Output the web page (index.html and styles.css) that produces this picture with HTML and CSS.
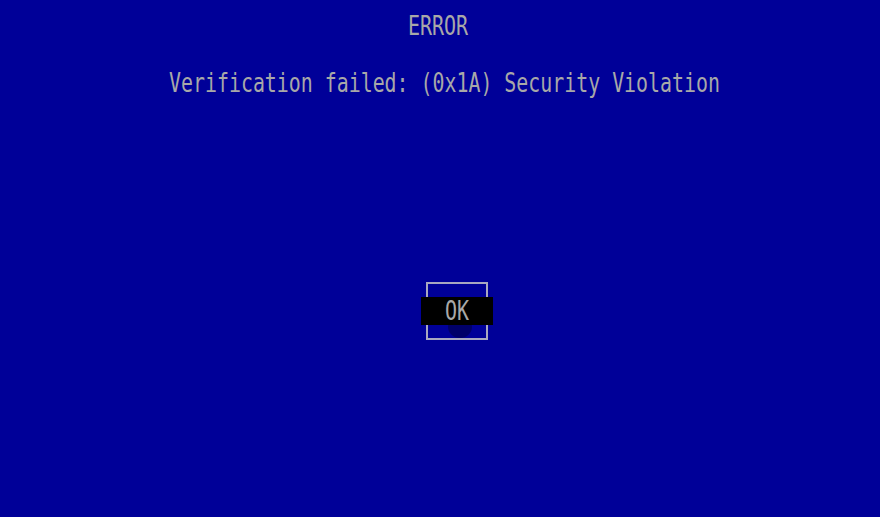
FILE: index.html
```html
<!DOCTYPE html>
<html>
<head>
<meta charset="utf-8">
<link rel="stylesheet" href="styles.css">
</head>
<body>
<main class="screen">
  <div class="title">ERROR</div>
  <div class="message">Verification failed: (0x1A) Security Violation</div>
  <div class="dialog">
    <div class="ok-box">
      <div class="ok-bar"><span class="ok-text">OK</span></div>
      <div class="shadow"></div>
    </div>
  </div>
</main>
</body>
</html>
```
FILE: styles.css
```css
html, body {
  margin: 0;
  padding: 0;
  background: #000098;
}
.screen {
  width: 880px;
  height: 517px;
  background: #000098;
  color: #a8a8a8;
  font-family: "DejaVu Sans Mono", "Liberation Mono", monospace;
  font-size: 19.6px;
  line-height: 20px;
  display: flex;
  flex-direction: column;
  align-items: center;
  overflow: hidden;
}
.title, .message, .ok-text {
  transform: scaleY(1.33);
  white-space: pre;
}
.title {
  margin-top: 16px;
  margin-right: 4px;
  font-size: 20px;
}
.message {
  margin-top: 38px;
  margin-left: 9px;
  font-size: 19.9px;
}
.dialog {
  margin-top: 188px;
  margin-left: 34px;
}
.ok-box {
  position: relative;
  width: 62px;
  height: 58px;
  box-sizing: border-box;
  border: 2px solid #a8a8c0;
  display: flex;
  align-items: center;
  justify-content: center;
}
.ok-bar {
  flex: none;
  width: 72px;
  height: 28px;
  background: #000000;
  display: flex;
  align-items: center;
  justify-content: center;
  position: relative;
  z-index: 1;
}
.ok-text {
  font-size: 20px;
  line-height: 20px;
  color: #a8a8a8;
}
.shadow {
  position: absolute;
  left: 20px;
  top: 32px;
  width: 24px;
  height: 22px;
  border-radius: 50%;
  background: #000068;
}
```
